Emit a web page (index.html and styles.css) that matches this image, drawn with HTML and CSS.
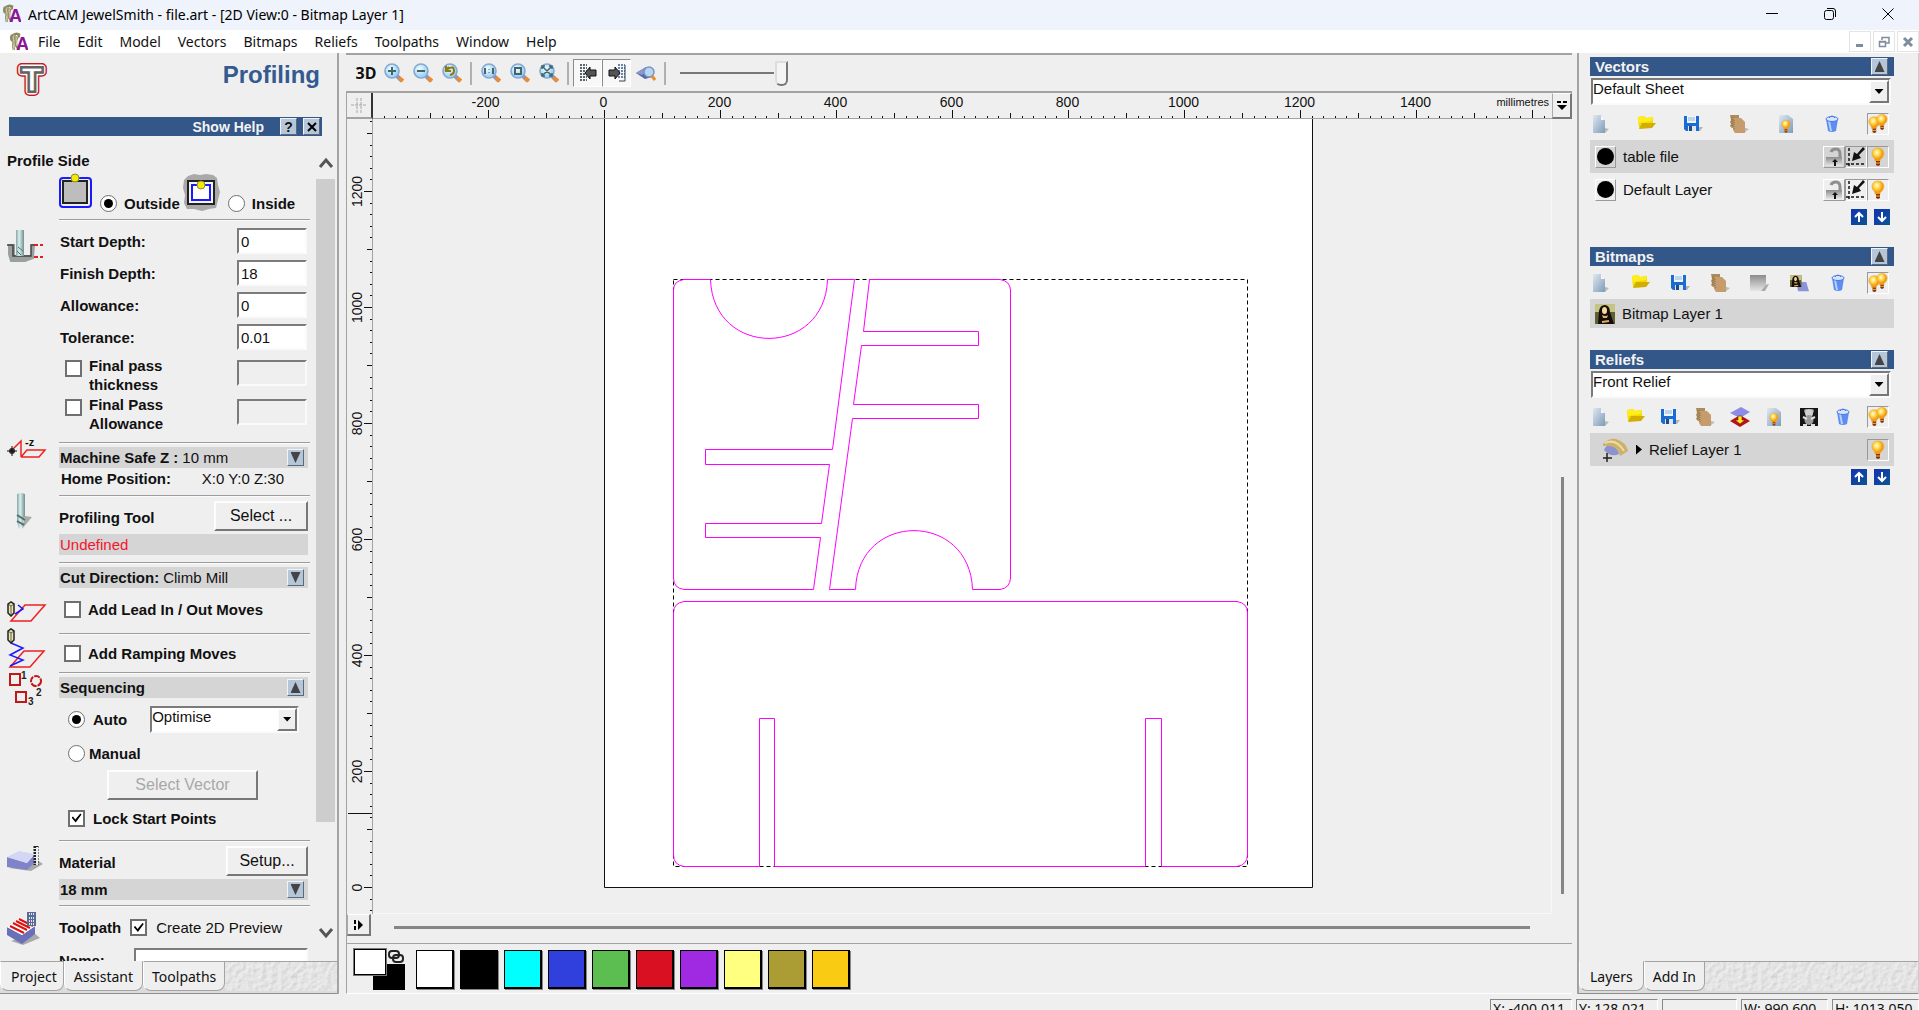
FILE: index.html
```html
<!DOCTYPE html>
<html lang="en">
<head>
  <meta charset="UTF-8" />
  <meta name="viewport" content="width=device-width, initial-scale=1.0"/>
  <title>ArtCAM JewelSmith - file.art</title>
  <link rel="stylesheet" href="styles.css">
</head>
<body>
  <!-- shared icons -->
  <svg class="defs" aria-hidden="true">
    <defs>
      <linearGradient id="gPage" x1="0" y1="0" x2="1" y2="1"><stop offset="0" stop-color="#dfe9f2"/><stop offset="1" stop-color="#7f9ab8"/></linearGradient>
      <radialGradient id="gLens" cx=".4" cy=".35"><stop offset="0" stop-color="#f4fdff"/><stop offset="1" stop-color="#a4d6f3"/></radialGradient>
      <radialGradient id="gBulb" cx=".4" cy=".35"><stop offset="0" stop-color="#fffde0"/><stop offset=".5" stop-color="#ffd84a"/><stop offset="1" stop-color="#f39a10"/></radialGradient>
      <linearGradient id="gGrey" x1="0" y1="0" x2="0" y2="1"><stop offset="0" stop-color="#8c8c8c"/><stop offset="1" stop-color="#e6e6e6"/></linearGradient>
      <linearGradient id="gSteel" x1="0" y1="0" x2="1" y2="0"><stop offset="0" stop-color="#86a5a5"/><stop offset=".4" stop-color="#dcefee"/><stop offset="1" stop-color="#6f8f8f"/></linearGradient>
      <linearGradient id="gArrow" x1="0" y1="0" x2="1" y2="1"><stop offset="0" stop-color="#1233b4"/><stop offset="1" stop-color="#0c5590"/></linearGradient>

      <filter id="plaster" x="0" y="0" width="100%" height="100%">
        <feTurbulence type="fractalNoise" baseFrequency="0.2" numOctaves="2" seed="4"/>
        <feDiffuseLighting surfaceScale="1" diffuseConstant="1" lighting-color="#eeeeee">
          <feDistantLight azimuth="225" elevation="66"/>
        </feDiffuseLighting>
      </filter>

      <symbol id="logo" viewBox="0 0 18 20">
        <path d="M2 3 Q0 8 3 9 M2 4 Q6 0 10 3 M5 3 Q2 10 4 18 M10 4 Q6 4 6 11 Q6 16 10 17" fill="none" stroke="#8d8a62" stroke-width="2.500"/>
        <path d="M4 3 Q2 11 4 18 M8 4 Q5 6 7 14" fill="none" stroke="#d2cea8" stroke-width="1"/>
        <text x="6" y="18" font-family="Liberation Sans" font-size="18" font-weight="bold" fill="#8d1596">A</text>
      </symbol>

      <symbol id="lens" viewBox="0 0 20 20">
        <path d="M13 13 L18 18" stroke="#8d97b5" stroke-width="4"/>
        <path d="M15 15 L19 18" stroke="#f08a2c" stroke-width="4"/>
        <circle cx="8" cy="8" r="7" fill="url(#gLens)" stroke="#83a9d2" stroke-width="1.6"/>
      </symbol>

      <symbol id="new" viewBox="0 0 20 20">
        <path d="M9 18 L14 14 L18 15 L14 19 Z" fill="#b9b9b9"/>
        <path d="M2 1 H10 L14 6 V19 H2 Z" fill="url(#gPage)"/>
        <path d="M10 1 L14 6 H10 Z" fill="#f3f8fc"/>
      </symbol>
      <symbol id="open" viewBox="0 0 20 20">
        <path d="M1 3 L7 2 L9 4 L16 3 V10 L2 14 Z" fill="#f2dc00"/>
        <path d="M2 15 L5 9 L19 9 L15 14 Z" fill="#d2ae00"/>
        <path d="M1 3 L7 2 L9 4 L16 3 L15 7 L2 9 Z" fill="#ffee1c"/>
      </symbol>
      <symbol id="save" viewBox="0 0 20 20">
        <path d="M15 13 L20 13 L17 17 L12 17 Z" fill="#b5b5b5"/>
        <path d="M1 2 H16 V17 H3 L1 15 Z" fill="#1b6cd2"/>
        <path d="M4 2 H13 V9 H4 Z" fill="#eef6ff"/>
        <path d="M5 4 H12 M5 6 H12" stroke="#8cb3e2"/>
        <path d="M5 12 H13 V17 H5 Z" fill="#dfe6ee"/>
        <path d="M6 12 H9 V17 H6 Z" fill="#244a86"/>
      </symbol>
      <symbol id="copy" viewBox="0 0 20 20">
        <path d="M13 13 L20 15 L15 19 L10 19 Z" fill="#bdbdbd"/>
        <path d="M1 1 H10 V14 H3 L1 12 L2 10 L1 8 L2 6 Z" fill="#ab8c5d"/>
        <path d="M5 4 H12 L16 8 V19 H6 L4 16 Z" fill="#c69c6c"/>
        <path d="M3 3 V13 M5 6 L5 16" stroke="#856a40" stroke-dasharray="1 1"/>
      </symbol>
      <symbol id="bulb" viewBox="0 0 20 20">
        <path d="M10 1 C4 1 2 7 6 11 Q7 12 7 14 H12 Q12 12 14 11 C18 6 15 1 10 1 Z" fill="url(#gBulb)" stroke="#eba63a" stroke-width=".6"/>
        <path d="M8 14 H12 V18 L10 19 L8 18 Z" fill="#8a2e00"/>
        <path d="M8 16 H12" stroke="#e8c15a"/>
      </symbol>
      <symbol id="bulbs" viewBox="0 0 22 22">
        <use href="#bulb" x="-3" y="2" width="20" height="20"/>
        <use href="#bulb" x="6" y="-1" width="19" height="20"/>
      </symbol>
      <symbol id="pagebulb" viewBox="0 0 20 20">
        <path d="M3 1 H12 L17 5 V19 H3 Z" fill="url(#gPage)"/>
        <use href="#bulb" x="3" y="5" width="14" height="15"/>
      </symbol>
      <symbol id="bin" viewBox="0 0 20 20">
        <path d="M4 5 H16 L14 17 Q10 19 6 17 Z" fill="#5d8df0"/>
        <path d="M6 7 L8 17 H10 L8 7 Z" fill="#b7d0ff"/>
        <ellipse cx="10" cy="5" rx="6" ry="2.5" fill="#d5e4ff" stroke="#4c7be0"/>
        <path d="M7 4 Q10 0 13 4" fill="none" stroke="#4c7be0"/>
      </symbol>
      <symbol id="grey" viewBox="0 0 20 20">
        <path d="M13 13 L20 11 L16 18 L12 18 Z" fill="#a8a8a8"/>
        <path d="M1 2 H17 V12 L12 18 H1 Z" fill="url(#gGrey)"/>
      </symbol>
      <symbol id="mona" viewBox="0 0 20 20">
        <path d="M0 0 H20 V20 H0 Z" fill="#5e6034"/>
        <path d="M0 0 H20 V8 H0 Z" fill="#c5c484"/>
        <path d="M3 20 L4 7 Q5 1 10 1 Q15 2 15 8 L19 20 Z" fill="#130e0a"/>
        <ellipse cx="9.500" cy="6.500" rx="2.500" ry="3.500" fill="#f7d89c"/>
        <path d="M7 11 Q11 13 13 11 L12 14 H8 Z" fill="#e6ae6c"/>
        <path d="M7 18 L14 17" stroke="#e0a869" stroke-width="2"/>
      </symbol>
      <symbol id="monapage" viewBox="0 0 22 20">
        <path d="M8 9 H19 L22 19 H10 Z" fill="#8d93d8"/>
        <use href="#mona" x="1" y="1" width="13" height="14"/>
      </symbol>
      <symbol id="merge" viewBox="0 0 20 20">
        <path d="M0 14 L10 8 L20 14 L10 20 Z" fill="#b5121b"/>
        <path d="M0 6 L11 0 L20 5 L10 11 Z" fill="#8c8ce6"/>
        <path d="M8 9 H12 V13 H15 L10 17 L5 13 H8 Z" fill="#ffee1c" stroke="#7d1010" stroke-width=".6"/>
      </symbol>
      <symbol id="bear" viewBox="0 0 20 20">
        <path d="M1 1 H19 V19 H1 Z" fill="#161616"/>
        <circle cx="7" cy="4" r="2" fill="#a0a0a0"/><circle cx="13" cy="4" r="2" fill="#a0a0a0"/>
        <circle cx="10" cy="6" r="4" fill="#cfcfcf"/>
        <ellipse cx="10" cy="13" rx="4.500" ry="5" fill="#9b9b9b"/>
        <path d="M4 10 L8 12 M16 10 L12 12 M4 18 H8 M12 18 H16" stroke="#dedede" stroke-width="2"/>
      </symbol>
      <symbol id="relief" viewBox="0 0 26 24">
        <path d="M2 12 Q5 5 11 8 Q16 11 17 16 Q9 20 2 12 Z" fill="#8c93cf"/>
        <path d="M1 6 Q7 0 14 1 Q24 4 26 13 L18 18 Q16 6 1 8 Z" fill="#cdb069"/>
        <path d="M3 5 Q14 0 22 13" fill="none" stroke="#ecdba5" stroke-width="2"/>
        <path d="M5 15 V24 M1 20 H10" stroke="#222" stroke-width="1.500"/>
      </symbol>
      <symbol id="lock" viewBox="0 0 20 20">
        <path d="M7 5 Q8 2 12 2 Q16 2 16 7 V10" fill="none" stroke="#8f8f8f" stroke-width="3"/>
        <path d="M2 10 H18 V19 H2 Z" fill="url(#gGrey)"/>
        <path d="M11 12 L14 15 H12 V19 H10 V15 H8 Z" fill="#111"/>
      </symbol>
      <symbol id="snap" viewBox="0 0 20 20">
        <path d="M3 1 V20 M0 17 H20" stroke="#111" stroke-width="1.500" stroke-dasharray="3 2"/>
        <path d="M19 2 L13 8 L15 11 L6 14 L8 5 L11 7 L17 0 Z" fill="#111"/>
      </symbol>
      <symbol id="up" viewBox="0 0 16 16">
        <path d="M0 0 H16 V16 H0 Z" fill="url(#gArrow)"/>
        <path d="M8 13 V4 M4 8 L8 4 L12 8" fill="none" stroke="#fff" stroke-width="2"/>
      </symbol>
      <symbol id="down" viewBox="0 0 16 16">
        <path d="M0 0 H16 V16 H0 Z" fill="url(#gArrow)"/>
        <path d="M8 3 V12 M4 8 L8 12 L12 8" fill="none" stroke="#fff" stroke-width="2"/>
      </symbol>
      <symbol id="pen" viewBox="0 0 8 16">
        <path d="M1 3 L4 1 L7 3 V12 L4 15 L1 12 Z" fill="#ece6ae" stroke="#222" stroke-width="1.500"/>
        <path d="M4 5 V14 M1 3 L4 5 L7 3" fill="none" stroke="#222" stroke-width=".7"/>
      </symbol>
    </defs>
  </svg>

  <header class="titlebar">
    <svg class="logo"><use href="#logo"/></svg>
    <span class="title">ArtCAM JewelSmith - file.art - [2D View:0 - Bitmap Layer 1]</span>
    <button class="win" aria-label="Minimize"><svg width="12" height="12"><path d="M0 5.500 H12"/></svg></button>
    <button class="win" aria-label="Restore"><svg width="12" height="12"><rect x=".5" y="2.500" width="9" height="9" rx="2"/><path d="M3 .5 H9 Q11.500 .5 11.500 3 V9"/></svg></button>
    <button class="win" aria-label="Close"><svg width="12" height="12"><path d="M.5 .5 L11.500 11.500 M11.500 .5 L.5 11.500"/></svg></button>
  </header>

  <nav class="menubar">
    <svg class="logo"><use href="#logo"/></svg>
    <a href="#">File</a><a href="#">Edit</a><a href="#">Model</a><a href="#">Vectors</a><a href="#">Bitmaps</a><a href="#">Reliefs</a><a href="#">Toolpaths</a><a href="#">Window</a><a href="#">Help</a>
    <div class="mdi">
      <button aria-label="Minimize view"><svg width="12" height="12"><path d="M2 9.500 H9" stroke-width="3"/></svg></button>
      <button aria-label="Restore view"><svg width="12" height="12"><path d="M4 4 V1.500 H11 V7 H8 M1.500 5.500 H7.500 V10.500 H1.500 Z M1 6 H8" stroke-width="1.500"/></svg></button>
      <button aria-label="Close view"><svg width="12" height="12"><path d="M2 2 L10 10 M10 2 L2 10" stroke-width="3"/></svg></button>
    </div>
  </nav>

  <main class="workspace">
    <!-- assistant -->
    <aside class="assistant">
      <div class="heading">
        <svg width="36" height="36" viewBox="0 0 36 36">
          <g font-family="Liberation Sans" font-size="34" font-weight="bold" text-anchor="middle">
            <text x="18" y="30" fill="none" stroke="#c8191e" stroke-width="10" stroke-linejoin="round">T</text>
            <text x="18" y="30" fill="none" stroke="#fafafa" stroke-width="7" stroke-linejoin="round">T</text>
            <text x="18" y="30" fill="none" stroke="#626262" stroke-width="4">T</text>
            <text x="18" y="30" fill="#fff" stroke="#626262" stroke-width="1">T</text>
          </g>
        </svg>
        <h1>Profiling</h1>
      </div>
      <div class="helpbar">
        <span>Show Help</span>
        <button class="mini">?</button>
        <button class="mini" aria-label="Close help"><svg width="10" height="10"><path d="M1 1 L9 9 M9 1 L1 9" stroke="#000" stroke-width="2"/></svg></button>
      </div>

      <div class="scroller">
        <form class="form">
          <h2>Profile Side</h2>
          <div class="side">
            <svg width="34" height="36"><rect x="2" y="5" width="31" height="29" rx="3" fill="#efefef" stroke="#1a1aff" stroke-width="2"/><rect x="5" y="8" width="24" height="22" fill="#bdbdbd" stroke="#222" stroke-width="2"/><circle cx="17" cy="5" r="4" fill="#f4ea00" stroke="#8d8a3a"/></svg>
            <input type="radio" name="side" id="outside" checked><label for="outside">Outside</label>
            <svg width="38" height="38"><path d="M6 3 L12 1 L18 2 L24 1 L31 2 L35 5 L36 12 L38 19 L36 27 L34 35 L27 36 L20 38 L12 36 L5 36 L2 30 L3 22 L1 15 L2 7 Z" fill="#a9a9a9"/><rect x="6" y="8" width="26" height="23" fill="#f4f4f4" stroke="#222" stroke-width="2"/><rect x="10" y="12" width="18" height="15" fill="#fff" stroke="#1a1aff" stroke-width="2"/><circle cx="19" cy="12" r="4" fill="#f4ea00" stroke="#8d8a3a"/></svg>
            <input type="radio" name="side" id="inside"><label for="inside">Inside</label>
          </div>

          <section class="depths">
            <svg class="mark" width="38" height="32"><path d="M2 15 H7 V26 H25 V15 H27 L26 28 L18 31 H4 L2 24 Z" fill="#9aa0a0" stroke="#9aa0a0" stroke-width="2"/><path d="M8 14 H24 V25 H8 Z" fill="#efefef"/><path d="M0 15 H6 V26 H24 V15 H28" fill="none" stroke="#444" stroke-width="1.500"/><path d="M8 15 H23" stroke="#efefef" stroke-width="3"/><rect x="9" y="0" width="8" height="26" fill="url(#gSteel)"/><path d="M11 17 L16 21 M10 21 L14 25" stroke="#50706f"/><path d="M27 15 H36 M27 27 H36" stroke="#e02020" stroke-width="2" stroke-dasharray="4 2"/></svg>
            <div class="fields">
              <div class="row"><label for="start">Start Depth:</label><input type="text" id="start" value="0"></div>
              <div class="row"><label for="finish">Finish Depth:</label><input type="text" id="finish" value="18"></div>
              <div class="row"><label for="allow">Allowance:</label><input type="text" id="allow" value="0"></div>
              <div class="row"><label for="tol">Tolerance:</label><input type="text" id="tol" value="0.01"></div>
            </div>
            <div class="passes">
              <div class="row"><input type="checkbox" id="fpt"><label for="fpt">Final pass<br>thickness</label><input type="text" aria-label="Final pass thickness value" disabled></div>
              <div class="row"><input type="checkbox" id="fpa"><label for="fpa">Final Pass<br>Allowance</label><input type="text" aria-label="Final pass allowance value" disabled></div>
            </div>
          </section>

          <section class="safez">
            <svg class="mark up" width="40" height="24"><path d="M14 20 V4 L4 14 M14 20 H32 L38 13 H20 L14 20" fill="none" stroke="#f02020" stroke-width="1.500"/><circle cx="5" cy="14" r="3" fill="#333"/><path d="M0 14 H10 M5 9 V19" stroke="#111"/><text x="18" y="9" font-size="11" font-weight="bold" fill="#111">-z</text></svg>
            <div class="bar"><b>Machine Safe Z :</b> 10 mm <button type="button" class="mini" aria-label="Expand safe Z"><i class="tri dn"></i></button></div>
            <div class="home"><b>Home Position:</b><span>X:0 Y:0 Z:30</span></div>
          </section>

          <section class="tool">
            <svg class="mark up" width="38" height="38"><path d="M18 26 L25 27 L15 39 Z" fill="#aaa"/><path d="M10 4 Q14 2 18 4 V26 L16 32 L18 34 L12 39 L10 32 Z" fill="url(#gSteel)"/><path d="M10 25 L18 30 M10 31 L17 35" stroke="#50706f" stroke-width="2"/></svg>
            <div class="row tall"><b>Profiling Tool</b><button type="button" class="btn select">Select ...</button></div>
            <div class="bar red">Undefined</div>
          </section>

          <section class="cut">
            <svg class="mark low" width="40" height="24"><path d="M4 20 L18 4 H38 L24 20 Z" fill="none" stroke="#f02020" stroke-width="1.500"/><path d="M11 4 L16 8 L8 13" fill="none" stroke="#1a1aff" stroke-width="1.500"/><use href="#pen" width="8" height="16"/></svg>
            <div class="bar"><b>Cut Direction:</b> Climb Mill <button type="button" class="mini" aria-label="Expand direction"><i class="tri dn"></i></button></div>
            <div class="row lead"><input type="checkbox" id="lead"><label for="lead">Add Lead In / Out Moves</label></div>
          </section>

          <section class="ramp">
            <svg class="mark up" width="40" height="42"><path d="M3 39 L17 23 H37 L23 39 Z" fill="none" stroke="#f02020" stroke-width="1.500"/><path d="M4 15 L16 20 L3 27 L16 32 L3 38" fill="none" stroke="#1a1aff" stroke-width="1.500"/><use href="#pen" width="8" height="16"/></svg>
            <div class="row"><input type="checkbox" id="ramp"><label for="ramp">Add Ramping Moves</label></div>
          </section>

          <section class="seq">
            <svg class="mark up" width="38" height="36"><g fill="none" stroke="#c01818" stroke-width="2"><rect x="3" y="7" width="10" height="11"/><circle cx="29" cy="14" r="5" stroke-dasharray="6 1"/><rect x="9" y="25" width="10" height="10"/></g><g font-size="10" font-weight="bold" fill="#222"><text x="14" y="12">1</text><text x="29" y="29">2</text><text x="21" y="38">3</text></g></svg>
            <div class="bar"><b>Sequencing</b> <button type="button" class="mini" aria-label="Collapse sequencing"><i class="tri"></i></button></div>
            <div class="row auto"><input type="radio" name="seq" id="auto" checked><label for="auto">Auto</label>
              <span class="combo"><select aria-label="Order"><option>Optimise</option></select><span class="drop"><i class="tri dn"></i></span></span>
            </div>
            <div class="row manual"><input type="radio" name="seq" id="manual"><label for="manual">Manual</label></div>
            <button type="button" class="btn vector" disabled>Select Vector</button>
            <div class="row locked"><input type="checkbox" id="lockpts" checked><label for="lockpts">Lock Start Points</label></div>
          </section>

          <section class="material">
            <svg class="mark mid" width="38" height="28"><path d="M2 22 L24 25 L36 18 L30 14 Z" fill="#a9a9a9"/><path d="M0 11 L20 17 L27 9 V17 L20 24 L0 21 Z" fill="#7f83c8"/><path d="M0 11 L12 5 L27 8 L20 17 Z" fill="#d3d6f5"/><path d="M29 0 V19" stroke="#222" stroke-width="5" stroke-dasharray="2 1"/><path d="M30 1 V19" stroke="#eee" stroke-width="2"/></svg>
            <div class="row tall"><b>Material</b><button type="button" class="btn setup">Setup...</button></div>
            <div class="bar"><b>18 mm</b> <button type="button" class="mini" aria-label="Expand material"><i class="tri dn"></i></button></div>
          </section>

          <section class="path">
            <svg class="mark mid" width="38" height="36"><path d="M4 30 L16 34 L33 27 L27 22 Z" fill="#a9a9a9"/><path d="M0 16 L15 24 L28 15 V23 L15 33 L0 24 Z" fill="#6a70b8"/><path d="M0 16 L13 7 L28 15 L15 24 Z" fill="#fff"/><path d="M3 15 L17 22 M6 12 L20 19 M9 10 L23 17 M12 8 L26 15" stroke="#e01010" stroke-width="2"/><rect x="20" y="1" width="9" height="14" fill="#5a6a92"/><path d="M22 3 H28 M22 7 H28 M22 10 H28 M22 13 H28" stroke="#dfe8f5" stroke-width="2" stroke-dasharray="1 1"/></svg>
            <div class="row"><b>Toolpath</b><input type="checkbox" id="preview" checked><label for="preview">Create 2D Preview</label></div>
            <div class="name"><label for="name">Name:</label><input type="text" id="name"></div>
          </section>
        </form>
        <div class="vscroll">
          <svg width="16" height="12"><path d="M2 10 L8 3 L14 10"/></svg>
          <div class="thumb"></div>
          <svg width="16" height="12"><path d="M2 2 L8 9 L14 2"/></svg>
        </div>
      </div>

      <div class="tabs">
        <button class="first">Project</button><button class="on">Assistant</button><button>Toolpaths</button>
        <svg class="plaster"><rect width="100%" height="100%" filter="url(#plaster)"/></svg>
      </div>
    </aside>

    <!-- 2D view -->
    <div class="center">
      <div class="toolbar">
        <button class="three">3D</button>
        <button aria-label="Zoom in"><svg><use href="#lens"/><path d="M4 8 H12 M8 4 V12" stroke="#46646c" stroke-width="2"/></svg></button>
        <button aria-label="Zoom out"><svg><use href="#lens"/><path d="M4 8 H12" stroke="#46646c" stroke-width="2"/></svg></button>
        <button aria-label="Zoom previous"><svg><use href="#lens"/><path d="M3 8 L7 4 M4 3 V8 H9 M6 6 Q12 2 12 8 Q12 11 8 12" fill="none" stroke="#8a7a10" stroke-width="2"/></svg></button>
        <hr>
        <button aria-label="Zoom 1:1"><svg><use href="#lens"/><path d="M4 5 V11 M12 5 V11" stroke="#46646c" stroke-width="2"/><path d="M8 6 V7 M8 9 V10" stroke="#46646c"/></svg></button>
        <button aria-label="Zoom objects"><svg><use href="#lens"/><rect x="5" y="5" width="6" height="6" fill="none" stroke="#46646c" stroke-width="2"/></svg></button>
        <button aria-label="Zoom all"><svg><use href="#lens"/><path d="M4 4 L12 12 M12 4 L4 12 M3 6 V3 H6 M10 3 H13 V6 M13 10 V13 H10 M6 13 H3 V10" fill="none" stroke="#46646c" stroke-width="1.500"/></svg></button>
        <hr>
        <button class="toggle" aria-label="Toggle left panel"><svg><path d="M2 2 H9 M2 5 H9 M2 8 H9 M2 11 H9 M2 14 H9 M2 17 H9" stroke="#234" stroke-width="1.500" stroke-dasharray="2 1"/><path d="M7 10 L12 4 V7 H18 V13 H12 V16 Z" fill="#555" stroke="#111"/></svg></button>
        <button class="toggle" aria-label="Toggle right panel"><svg><path d="M11 2 H18 M11 5 H18 M11 8 H18 M11 11 H18 M11 14 H18" stroke="#3a5c92" stroke-width="1.500" stroke-dasharray="2 1"/><path d="M18 2 V18 H12" fill="none" stroke="#345"/><path d="M13 10 L8 4 V7 H2 V13 H8 V16 Z" fill="#555" stroke="#111"/></svg></button>
        <button class="eye" aria-label="Preview relief"><svg><path d="M0 10 L10 4 L16 7 V14 L9 16 Z" fill="#5666a4"/><path d="M0 10 L10 4 L12 8 L6 12 Z" fill="#8c98cc"/><circle cx="13" cy="9" r="5" fill="#b8d4f4" stroke="#7b94c4" stroke-width="1.500"/><path d="M16 13 L19 17" stroke="#f08a2c" stroke-width="3"/></svg></button>
        <hr>
        <input type="range" aria-label="Contrast" value="100">
      </div>

      <div class="view">
        <div class="corner"><svg width="16" height="16"><path d="M0 8 H16 M6 1 V16 M10 1 V16" stroke="#a5a5a5" stroke-dasharray="3 1"/></svg></div>
        <div class="hruler">
          <svg id="hruler"></svg>
          <span>millimetres</span>
        </div>
        <button class="units" aria-label="Units"><svg width="12" height="12"><path d="M1 2 H5 M7 2 H11" stroke="#000" stroke-width="2"/><path d="M1 5 H11 L6 10 Z"/></svg></button>
        <svg class="vruler" id="vruler"></svg>

        <svg class="drawing">
          <path class="sheet" d="M231.500 -2 V768.500 H939.500 V-2"/>
          <rect class="bounds" x="300.500" y="160.500" width="574" height="587"/>
          <path class="vec" d="M311 160.500 H337.500 C340 239 452 239 454.500 160.500 H481.500 L459.500 330.500 H332.500 V345.500 H456.500 L448.500 404.500 H332.500 V418.500 H447.500 L440.500 470.500 H311 Q300.500 469 300.500 459 V171 Q300.500 162 311 160.500 Z"/>
          <path class="vec" d="M496.500 160.500 H627 Q637 162 637.500 171 V459 Q637 469 627 470.500 H599.500 C597 392 485 392 482.500 470.500 H456.500 L479.500 299.500 H605.500 V285.500 H480.500 L488.500 226.500 H605.500 V212.500 H490.500 Z"/>
          <path class="vec" d="M386.500 747.500 H311 Q300.500 746 300.500 736 V494 Q300.500 484 311 482.500 H864 Q874.500 484 874.500 494 V736 Q874 746 864 747.500 H788.500 V599.500 H772.500 V747.500 H401.500 V599.500 H386.500 Z"/>
        </svg>
        <div class="vtrack"></div>
        <button class="play" aria-label="Show pages"><svg width="12" height="12"><path d="M2 1 V5 M2 7 V11" stroke="#000" stroke-width="2"/><path d="M5 1 L10 6 L5 11 Z"/></svg></button>
        <div class="htrack"></div>
      </div>

      <div class="palette">
        <div class="current">
          <span class="fore"></span><span class="back"></span>
          <svg width="16" height="14"><rect x="1" y="1" width="10" height="7" rx="3"/><rect x="5" y="5" width="10" height="7" rx="3"/></svg>
        </div>
        <button class="swatch white" aria-label="White"></button>
        <button class="swatch black" aria-label="Black"></button>
        <button class="swatch cyan" aria-label="Cyan"></button>
        <button class="swatch blue" aria-label="Blue"></button>
        <button class="swatch green" aria-label="Green"></button>
        <button class="swatch crimson" aria-label="Red"></button>
        <button class="swatch purple" aria-label="Purple"></button>
        <button class="swatch yellow" aria-label="Yellow"></button>
        <button class="swatch olive" aria-label="Olive"></button>
        <button class="swatch amber" aria-label="Amber"></button>
      </div>
    </div>

    <!-- layers -->
    <aside class="layers">
      <div class="groups">
        <section class="group">
          <h2>Vectors <button class="mini" aria-label="Collapse vectors"><i class="tri"></i></button></h2>
          <span class="combo"><select aria-label="Sheet"><option>Default Sheet</option></select><span class="drop"><i class="tri dn"></i></span></span>
          <div class="icons">
            <button aria-label="New"><svg><use href="#new"/></svg></button>
            <button aria-label="Open"><svg><use href="#open"/></svg></button>
            <button aria-label="Save"><svg><use href="#save"/></svg></button>
            <button aria-label="Copy"><svg><use href="#copy"/></svg></button>
            <button aria-label="Show sheet"><svg><use href="#pagebulb"/></svg></button>
            <button aria-label="Delete"><svg><use href="#bin"/></svg></button>
            <button class="sunk" aria-label="Toggle all"><svg><use href="#bulbs"/></svg></button>
          </div>
          <div class="layer active">
            <button class="dot" aria-label="Colour"></button><span>table file</span>
            <button class="raised" aria-label="Lock"><svg><use href="#lock"/></svg></button><button class="sunk" aria-label="Snap"><svg><use href="#snap"/></svg></button><button class="sunk" aria-label="Visible"><svg><use href="#bulb"/></svg></button>
          </div>
          <div class="layer">
            <button class="dot" aria-label="Colour"></button><span>Default Layer</span>
            <button class="raised" aria-label="Lock"><svg><use href="#lock"/></svg></button><button class="sunk" aria-label="Snap"><svg><use href="#snap"/></svg></button><button class="sunk" aria-label="Visible"><svg><use href="#bulb"/></svg></button>
          </div>
          <div class="order"><button aria-label="Up"><svg><use href="#up"/></svg></button><button aria-label="Down"><svg><use href="#down"/></svg></button></div>
        </section>

        <section class="group">
          <h2>Bitmaps <button class="mini" aria-label="Collapse bitmaps"><i class="tri"></i></button></h2>
          <div class="icons tight">
            <button aria-label="New"><svg><use href="#new"/></svg></button>
            <button aria-label="Open"><svg><use href="#open"/></svg></button>
            <button aria-label="Save"><svg><use href="#save"/></svg></button>
            <button aria-label="Copy"><svg><use href="#copy"/></svg></button>
            <button aria-label="Clear"><svg><use href="#grey"/></svg></button>
            <button aria-label="To relief"><svg><use href="#monapage"/></svg></button>
            <button aria-label="Delete"><svg><use href="#bin"/></svg></button>
            <button class="sunk" aria-label="Toggle all"><svg><use href="#bulbs"/></svg></button>
          </div>
          <div class="layer active short"><svg class="thumbnail"><use href="#mona"/></svg><span>Bitmap Layer 1</span></div>
        </section>

        <section class="group">
          <h2>Reliefs <button class="mini" aria-label="Collapse reliefs"><i class="tri"></i></button></h2>
          <span class="combo"><select aria-label="Relief side"><option>Front Relief</option></select><span class="drop"><i class="tri dn"></i></span></span>
          <div class="icons">
            <button aria-label="New"><svg><use href="#new"/></svg></button>
            <button aria-label="Open"><svg><use href="#open"/></svg></button>
            <button aria-label="Save"><svg><use href="#save"/></svg></button>
            <button aria-label="Copy"><svg><use href="#copy"/></svg></button>
            <button aria-label="Merge"><svg><use href="#merge"/></svg></button>
            <button aria-label="Show"><svg><use href="#pagebulb"/></svg></button>
            <button aria-label="Greyscale"><svg><use href="#bear"/></svg></button>
            <button aria-label="Delete"><svg><use href="#bin"/></svg></button>
            <button class="sunk" aria-label="Toggle all"><svg><use href="#bulbs"/></svg></button>
          </div>
          <div class="layer active relief">
            <svg class="shape"><use href="#relief"/></svg><i class="tri rt"></i><span>Relief Layer 1</span>
            <button class="sunk" aria-label="Visible"><svg><use href="#bulb"/></svg></button>
          </div>
          <div class="order"><button aria-label="Up"><svg><use href="#up"/></svg></button><button aria-label="Down"><svg><use href="#down"/></svg></button></div>
        </section>
      </div>
      <div class="tabs">
        <button class="on">Layers</button><button>Add In</button>
        <svg class="plaster"><rect width="100%" height="100%" filter="url(#plaster)"/></svg>
      </div>
    </aside>
  </main>

  <footer class="status">
    <span class="c1">X: -400.011</span><span class="c1">Y: 128.021</span><span class="c2"></span><span class="c3">W: 990.600</span><span class="c3">H: 1013.050</span>
  </footer>

  <script>
    const NS = "http://www.w3.org/2000/svg";
    const step = 11.6; // pixels for 20 mm

    function add(svg, name, attrs, text) {
      const el = document.createElementNS(NS, name);
      for (const k in attrs) el.setAttribute(k, attrs[k]);
      if (text !== undefined) el.textContent = text;
      svg.appendChild(el);
    }

    function tickLength(i) {
      if (i % 10 === 0) return 8;
      return i % 5 === 0 ? 5 : 2;
    }

    const h = document.getElementById("hruler");
    const unitsLeft = h.clientWidth - 80; // no numbers under the units label
    for (let i = -19; i < 82; i++) {
      const x = Math.round(231 + i * step) + 0.5;
      add(h, "path", { d: `M${x} 25 V${25 - tickLength(i)}` });
      if (i % 10 === 0 && x < unitsLeft) add(h, "text", { x: x - (i < 0 ? 3 : 1), y: 14 }, i * 20);
    }

    const v = document.getElementById("vruler");
    for (let i = -2; i < 67; i++) {
      const y = Math.round(768 - i * step) + 0.5;
      add(v, "path", { d: `M25 ${y} H${25 - tickLength(i)}` });
      if (i % 10 === 0) add(v, "text", { transform: `translate(15 ${y}) rotate(-90)` }, i * 20);
    }
    add(v, "path", { d: "M1 694.5 H25" }); // cursor position
  </script>
</body>
</html>
```
FILE: styles.css
```css
* {
  box-sizing: border-box;
}

body {
  margin: 0;
  height: 100vh;
  overflow: hidden;
  display: grid;
  grid-template-rows: 30px 23px minmax(0, 1fr) 16px;
  background: #efefef;
  color: #111;
  font-family: "Liberation Sans", Arial, sans-serif;
  font-size: 15px;
}

button, input, select {
  font: inherit;
  color: inherit;
  margin: 0;
  padding: 0;
}

button {
  border: 0;
  background: none;
  display: flex;
  align-items: center;
  justify-content: center;
}

h1, h2 {
  margin: 0;
}

svg {
  display: block;
  flex: none;
}

.defs {
  position: absolute;
  width: 0;
  height: 0;
}

/* window frame */
.titlebar, .menubar {
  display: flex;
  align-items: center;
  font-family: "Noto Sans", "Open Sans", sans-serif;
  font-size: 14px;
}

.titlebar {
  background: #eff3fb;
  padding-left: 3px;
  padding-right: 2px;
  padding-bottom: 2px;
  color: #000;
}

.logo {
  width: 18px;
  height: 20px;
}

.title {
  flex: 1;
  margin-left: 7px;
}

.win {
  width: 58px;
  height: 28px;
}

.win svg {
  fill: none;
  stroke: #000;
}

.menubar {
  background: #fff;
  padding-left: 10px;
}

.menubar a {
  color: #111;
  text-decoration: none;
  margin-right: 17px;
}

.menubar .logo {
  margin-right: 10px;
}

.mdi {
  display: flex;
  gap: 2px;
  margin-left: auto;
}

.mdi button {
  width: 22px;
  height: 21px;
  border: 1px solid #e4e4e4;
}

.mdi svg {
  fill: none;
  stroke: #7d8d9d;
}

.workspace {
  display: grid;
  grid-template-columns: 344px minmax(0, 1fr) 343px;
  min-height: 0;
}

/* shared controls */
.mini {
  width: 17px;
  height: 17px;
  flex: none;
  background: #b4c6d8;
  border: 1px solid;
  border-color: #eef4fa #59697a #59697a #eef4fa;
  font-weight: bold;
  line-height: 14px;
  color: #111;
}

.tri {
  width: 10px;
  height: 11px;
  background: #444;
  clip-path: polygon(50% 0, 100% 100%, 0 100%);
}

.tri.dn {
  clip-path: polygon(0 0, 100% 0, 50% 100%);
}

.tri.rt {
  width: 6px;
  height: 10px;
  background: #000;
  clip-path: polygon(0 0, 100% 50%, 0 100%);
}

.btn {
  height: 30px;
  border: 2px solid;
  border-color: #fdfdfd #777 #777 #fdfdfd;
  font-size: 16px;
}

.btn:disabled {
  color: #a8a8a8;
}

input[type=text] {
  width: 70px;
  height: 26px;
  padding: 0 2px;
  background: #fff;
  border: 2px solid;
  border-color: #7b7b7b #fafafa #fafafa #7b7b7b;
  border-radius: 0;
}

input[type=text]:disabled {
  background: #efefef;
}

input[type=checkbox], input[type=radio] {
  appearance: none;
  width: 17px;
  height: 17px;
  flex: none;
  display: grid;
  place-items: center;
  background: #fff;
  border: 2px solid #6f6f6f;
}

input[type=radio] {
  border-width: 1px;
  border-radius: 50%;
}

input[type=radio]:checked::before {
  content: "";
  width: 9px;
  height: 9px;
  border-radius: 50%;
  background: #000;
}

input[type=checkbox]:checked::before {
  content: "";
  width: 10px;
  height: 10px;
  background: #000;
  clip-path: polygon(0 45%, 15% 35%, 38% 65%, 88% 5%, 100% 15%, 42% 95%);
}

.combo {
  position: relative;
  display: block;
  height: 27px;
}

.combo select {
  appearance: none;
  width: 100%;
  height: 100%;
  padding: 0 0 6px;
  background: #fff;
  border: 2px solid;
  border-color: #7b7b7b #fafafa #fafafa #7b7b7b;
  border-radius: 0;
}

.combo .drop {
  position: absolute;
  top: 2px;
  right: 2px;
  bottom: 2px;
  width: 20px;
  display: grid;
  place-items: center;
  background: #efefef;
  border: 2px solid;
  border-color: #fdfdfd #777 #777 #fdfdfd;
  pointer-events: none;
}

.drop .tri {
  width: 9px;
  height: 5px;
  background: #000;
}

/* assistant */
.assistant {
  display: flex;
  flex-direction: column;
  min-height: 0;
  width: 339px;
  border-right: 2px solid #a3a3a3;
}

.heading {
  display: flex;
  justify-content: space-between;
  height: 64px;
  padding: 8px 17px 0 14px;
}

.heading h1 {
  color: #345a91;
  font-size: 24px;
  line-height: 28px;
}

.helpbar {
  display: flex;
  align-items: center;
  justify-content: flex-end;
  gap: 6px;
  height: 19px;
  flex: none;
  margin: 0 15px 14px 9px;
  padding-right: 2px;
  background: #335788;
  color: #f3f3f3;
  font-size: 14px;
  font-weight: bold;
}

.helpbar span {
  margin-right: 10px;
}

.scroller {
  flex: 1;
  min-height: 0;
  display: flex;
  gap: 6px;
  overflow: hidden;
}

.form {
  width: 310px;
}

.form h2 {
  font-size: 15px;
  line-height: 21px;
  padding-left: 7px;
}

.form label, .form b {
  font-weight: bold;
}

.side {
  display: flex;
  align-items: flex-start;
  height: 48px;
  padding-left: 58px;
}

.side > svg {
  margin-top: 2px;
}

.side input {
  margin: 24px 7px 0 8px;
}

.side label {
  margin-top: 24px;
}

.side label[for=outside] {
  margin-right: 2px;
}

.form section {
  position: relative;
  margin-left: 59px;
  border-top: 1px solid #9d9d9d;
  box-shadow: inset 0 1px #fafafa;
  padding: 4px 2px 0 0;
}

.mark {
  position: absolute;
  left: -52px;
  top: 10px;
  overflow: visible;
}

.mark.up {
  top: -6px;
}

.mark.mid {
  top: 5px;
}

.mark.low {
  top: auto;
  bottom: 8px;
}

.row {
  display: flex;
  align-items: center;
  justify-content: space-between;
}

.form .depths {
  padding: 8px 3px 8px 0;
}

.fields {
  display: grid;
  gap: 6px;
  padding-left: 1px;
}

.passes {
  padding-top: 6px;
}

.passes .row {
  height: 39px;
  padding-left: 6px;
  align-items: flex-start;
  line-height: 19px;
}

.passes input {
  margin-top: 4px;
}

.passes label {
  flex: 1;
  padding-left: 7px;
}

.bar {
  display: flex;
  align-items: center;
  gap: 4px;
  height: 21px;
  padding-left: 1px;
  padding-right: 4px;
  background: #d5d5d5;
}

.bar .mini {
  margin-left: auto;
}

.red {
  color: #f5142d;
}

.form .safez, .form .tool, .form .cut {
  padding-bottom: 7px;
}

.home {
  display: flex;
  justify-content: space-between;
  height: 20px;
  padding: 2px 24px 0 2px;
}

.form .tool, .form .material {
  padding-top: 5px;
}

.tall {
  height: 33px;
  align-items: flex-start;
  line-height: 34px;
}

.select {
  width: 94px;
}

.setup {
  width: 82px;
}

.form .cut {
  padding-bottom: 3px;
}

.lead, .ramp .row {
  height: 42px;
  padding-left: 5px;
  gap: 7px;
  justify-content: flex-start;
}

.form .ramp {
  padding-top: 1px;
}

.ramp .row {
  height: 37px;
}

.form .seq {
  padding-bottom: 8px;
}

.auto, .manual, .locked {
  justify-content: flex-start;
  gap: 8px;
  height: 28px;
  margin-top: 7px;
  padding-left: 9px;
}

.manual {
  gap: 4px;
  margin-top: 6px;
}

.locked {
  margin-top: 4px;
}

.auto .combo {
  width: 149px;
  margin-left: 15px;
}

.vector {
  width: 151px;
  margin: 3px 0 0 48px;
}

.form .material {
  padding-bottom: 5px;
}

.form .path {
  padding-top: 1px;
}

.path .row {
  height: 41px;
  justify-content: flex-start;
  gap: 9px;
}

.form label[for=preview] {
  font-weight: normal;
}

.name {
  display: flex;
  justify-content: space-between;
}

.name label {
  padding-top: 4px;
}

.name input[type=text] {
  width: 174px;
  flex: none;
}

.vscroll {
  width: 19px;
  display: flex;
  flex-direction: column;
  align-items: center;
  padding: 7px 0 22px;
}

.vscroll svg {
  fill: none;
  stroke: #555;
  stroke-width: 3px;
}

.thumb {
  width: 19px;
  height: 643px;
  margin: 10px 0 auto;
  background: #cdcdcd;
}

/* tabs at the foot of both side panels */
.tabs {
  display: flex;
  flex: none;
  height: 33px;
  padding-bottom: 2px;
  border-bottom: 1px solid #8d8d8d;
  background: #dcdcdc;
  font-family: "Noto Sans", "Open Sans", sans-serif;
  font-size: 14px;
}

.tabs button {
  background: #efefef;
  border: 1px solid #a3a3a3;
  border-left-color: #fff;
  border-radius: 0 0 8px 8px;
  padding: 0 8px;
}

.tabs .on {
  border-top-color: #efefef;
  padding: 0 9px;
}

.tabs .first {
  padding: 0 6px 0 10px;
}

.plaster {
  flex: 1;
  min-width: 0;
  height: 30px;
  border-top: 1px solid #a3a3a3;
}

/* centre */
.center {
  display: flex;
  flex-direction: column;
  min-height: 0;
  margin-left: 2px;
  margin-right: 4px;
  border-top: 2px solid #a3a3a3;
}

.toolbar {
  display: flex;
  align-items: center;
  height: 36px;
  padding-left: 7px;
}

.toolbar button {
  width: 29px;
  height: 28px;
}

.toolbar svg {
  width: 20px;
  height: 20px;
}

.toolbar .three {
  width: 26px;
  font-family: "Noto Sans", "Open Sans", sans-serif;
  font-weight: bold;
  font-size: 16px;
}

.toolbar hr {
  width: 2px;
  height: 23px;
  margin: 0 4px;
  border: 0;
  background: #b0b0b0;
}

.toolbar .toggle {
  background: #f8f8f8;
  border: 1px solid;
  border-color: #8c8c8c #fff #fff #8c8c8c;
}

.toolbar input {
  appearance: none;
  width: 108px;
  height: 26px;
  margin-left: 10px;
  background: linear-gradient(#777, #777) 0 12px / 94px 2px no-repeat;
}

.toolbar input::-webkit-slider-thumb {
  appearance: none;
  width: 13px;
  height: 25px;
  background: #f4f4f4;
  border: 2px solid;
  border-color: #ddd #777 #777 #ddd;
  border-radius: 0 0 6px 6px;
}

.view {
  flex: 1;
  min-height: 0;
  display: grid;
  grid-template-columns: 26px minmax(0, 1fr) 20px;
  grid-template-rows: 26px minmax(0, 1fr) 28px;
  border-top: 2px solid #a3a3a3;
  border-left: 1px solid #a3a3a3;
  padding-bottom: 1px;
}

.corner {
  display: grid;
  place-items: center;
  border-right: 2px solid #333;
  border-bottom: 2px solid #a3a3a3;
}

.hruler {
  position: relative;
  border-bottom: 1px solid #a3a3a3;
}

.hruler svg {
  width: 100%;
  height: 25px;
}

.hruler span {
  position: absolute;
  right: 3px;
  top: 2px;
  font-size: 11px;
  line-height: 14px;
}

.hruler path, .vruler path {
  stroke: #111;
}

.hruler text, .vruler text {
  font-size: 14px;
  text-anchor: middle;
  fill: #111;
}

.units, .play {
  border: 1px solid;
  border-color: #fff #777 #777 #aaa;
  border-width: 1px 2px 2px 1px;
}

.vruler {
  width: 26px;
  height: 100%;
  border-right: 1px solid #a3a3a3;
  overflow: hidden;
}

.drawing {
  width: 100%;
  height: 100%;
  border-right: 1px solid #f8f8f8;
  border-bottom: 1px solid #f8f8f8;
}

.sheet {
  fill: #fff;
  stroke: #111;
}

.bounds {
  fill: none;
  stroke: #000;
  stroke-dasharray: 4 3;
}

.vec {
  fill: none;
  stroke: #ff00ff;
}

.vtrack {
  width: 3px;
  margin: 358px auto 20px;
  background: #858585;
}

.play {
  width: 24px;
  height: 22px;
}

.htrack {
  height: 3px;
  margin: 12px 22px 0 21px;
  background: #858585;
}

.palette {
  display: flex;
  align-items: flex-start;
  gap: 6px;
  height: 51px;
  padding: 6px 0 0 7px;
  border: 1px solid #a3a3a3;
  border-right: 0;
  border-bottom-color: #fff;
}

.current {
  position: relative;
  width: 56px;
  height: 40px;
}

.fore, .back {
  position: absolute;
  width: 32px;
  height: 26px;
  border: 1px solid #000;
}

.fore {
  top: -1px;
  left: 0;
  background: #fff;
  outline: 1px solid #777;
  z-index: 1;
}

.back {
  top: 14px;
  left: 19px;
  background: #000;
}

.current svg {
  position: absolute;
  top: 0;
  left: 34px;
  fill: none;
  stroke: #222;
  stroke-width: 2px;
}

.swatch {
  width: 38px;
  height: 39px;
  border: 1px solid #000;
  border-width: 1px 2px 2px 1px;
  box-shadow: 1px 1px #888;
}

.white { background: #fff; }
.black { background: #000; }
.cyan { background: #00ffff; }
.blue { background: #3040dd; }
.green { background: #5cbe50; }
.crimson { background: #d90f22; }
.purple { background: #a02ae2; }
.yellow { background: #ffff80; }
.olive { background: #ab9d33; }
.amber { background: #facb13; }

/* layers */
.layers {
  display: flex;
  flex-direction: column;
  min-height: 0;
  margin-left: 1px;
  border-left: 2px solid #a3a3a3;
  border-right: 1px solid #ccc;
}

.groups {
  flex: 1;
  padding: 4px 24px 0 11px;
}

.group {
  margin-bottom: 22px;
}

.group h2 {
  display: flex;
  align-items: center;
  justify-content: space-between;
  height: 19px;
  padding: 0 6px 0 5px;
  background: #335788;
  color: #f3f3f3;
  font-size: 15px;
}

.group .combo {
  margin: 2px 3px 0 1px;
}

.icons {
  display: flex;
  justify-content: space-between;
  align-items: center;
  height: 22px;
  margin: 8px 5px 5px 0;
}

.icons.tight {
  margin-top: 6px;
}

.icons button, .layer button {
  width: 22px;
  height: 22px;
}

.icons svg, .layer svg {
  width: 20px;
  height: 20px;
}

.sunk {
  border: 1px solid;
  border-color: #999 #fff #fff #999;
}

.raised {
  border: 1px solid;
  border-color: #fff #999 #999 #fff;
}

.layer {
  display: flex;
  align-items: center;
  height: 33px;
  padding: 0 5px;
}

.layer.active {
  background: #d5d5d5;
}

.layer.short {
  height: 29px;
}

.layer span {
  flex: 1;
  margin-left: 7px;
}

.layer .dot {
  width: 21px;
  border: 1px solid;
  border-color: #fff #999 #999 #fff;
}

.dot::before {
  content: "";
  width: 17px;
  height: 17px;
  border-radius: 50%;
  background: #000;
}

.layer.relief {
  padding-left: 12px;
}

.layer .shape {
  width: 26px;
  height: 24px;
  margin-right: 8px;
}

.order {
  display: flex;
  justify-content: flex-end;
  gap: 7px;
  padding: 3px 4px 0 0;
}

.order svg {
  width: 16px;
  height: 16px;
}

.layers .tabs .on {
  padding: 0 10px;
}

/* status bar */
.status {
  display: flex;
  justify-content: flex-end;
  gap: 4px;
  padding-top: 5px;
  overflow: hidden;
  font-family: "Noto Sans", "Open Sans", sans-serif;
  font-size: 14px;
  line-height: 16px;
}

.status span {
  height: 22px;
  padding: 1px 2px 0;
  border: 1px solid;
  border-color: #888 #fff #fff #888;
}

.c1 {
  width: 82px;
}

.c2 {
  width: 75px;
}

.c3 {
  width: 87px;
}
```
